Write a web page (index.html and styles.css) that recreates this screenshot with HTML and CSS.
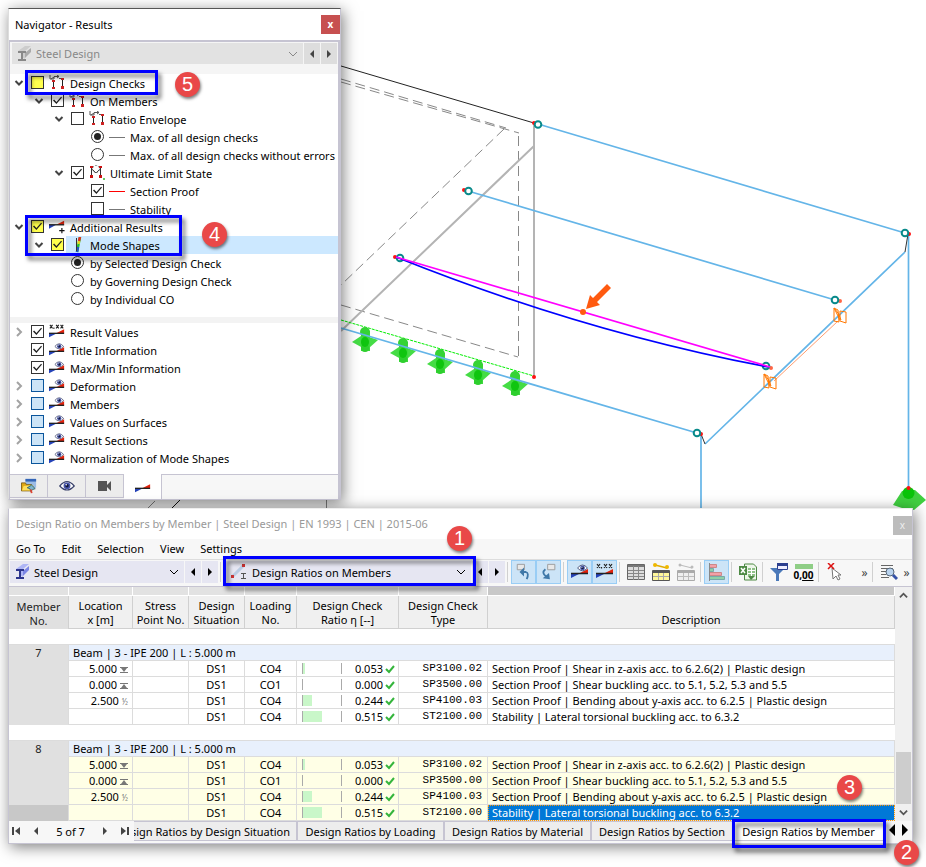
FILE: index.html
```html
<!DOCTYPE html>
<html lang="en">
<head>
<meta charset="utf-8">
<title>Steel Design Results</title>
<link rel="stylesheet" href="styles.css">
</head>
<body>
<svg class="defs" aria-hidden="true">
  <defs>
    <symbol id="i-open" viewBox="0 0 10 10"><path d="M1.5 3 5 6.500 8.500 3" fill="none" stroke="#444" stroke-width="2"/></symbol>
    <symbol id="i-closed" viewBox="0 0 10 10"><path d="M3 1 7 5 3 9" fill="none" stroke="#a3a3a3" stroke-width="2"/></symbol>
    <symbol id="i-down" viewBox="0 0 10 10"><path d="M1 3 5 7 9 3" fill="none" stroke="currentColor" stroke-width="1"/></symbol>
    <symbol id="i-left" viewBox="0 0 8 8"><path d="M6 0v8L2 4z" fill="currentColor"/></symbol>
    <symbol id="i-right" viewBox="0 0 8 8"><path d="M2 0v8l4-4z" fill="currentColor"/></symbol>
    <symbol id="i-frame" viewBox="0 0 16 16"><path d="M4.500 6v8M13.500 3v10" fill="none" stroke="#222"/><path d="M1 0v4h4V2M2 4l3-2M5 1.500h5M8 0l2 1.500L8 3M10 3.500h4" fill="none" stroke="#555"/><path d="M3 5h3v2H3zM3 12h3v2H3zM12 11h3v3h-3zM12 3h3v2h-3z" fill="#c22"/></symbol>
    <symbol id="i-uls" viewBox="0 0 16 16"><path d="M2.500 3v9M11.500 3v9M3 4l4 4 4-4" fill="none" stroke="#333"/><circle cx="7" cy="4" r="3.500" fill="none" stroke="#777" stroke-dasharray="2 1"/><path d="M1 1h3v2H1zM10 1h3v2h-3zM1 10h3v3H1zM10 10h3v3h-3z" fill="#c11"/><path d="M14 13h2v2h-2z" fill="#6c6"/></symbol>
    <symbol id="i-result" viewBox="0 0 18 16"><path d="M0 14V9.500h9z" fill="#2442b8"/><path d="M8 9.500 17 5v4.500z" fill="#e3210b"/><path d="M0 9.500h17" stroke="#222" stroke-width="1.500"/></symbol>
    <symbol id="i-eye" viewBox="0 0 20 12"><path d="M1 6Q10-5 19 6 10 16 1 6z" fill="#fff" stroke="#38406a" stroke-width="1.500"/><circle cx="10" cy="5.800" r="4.300" fill="#4654a8"/><circle cx="10" cy="5.800" r="2.200" fill="#10163c"/><circle cx="9" cy="4.500" r="1" fill="#fff"/></symbol>
    <symbol id="i-result-plus" viewBox="0 0 18 16"><path d="M0 10V5.500h8z" fill="#2442b8"/><path d="M8 5.500 17 1v4.500z" fill="#e3210b"/><path d="M0 5.500h17" stroke="#222" stroke-width="1.500"/><path d="M14.500 9v6M11.500 12h6" stroke="#111" stroke-width="1.300"/></symbol>
    <symbol id="i-result-eye" viewBox="0 0 18 16"><use href="#i-result"/><use href="#i-eye" x="6" y="0" width="11" height="8"/></symbol>
    <symbol id="i-result-val" viewBox="0 0 18 16"><use href="#i-result"/><path d="m1 0 3 4m0-4L1 4m7-4 3 4m0-4L8 4m5-4 3 4m0-4-3 4M5.500 3v1.500" stroke="#222" stroke-width="1.200" fill="none"/></symbol>
    <symbol id="i-mode" viewBox="0 0 16 16"><path d="M11 0 8 15" stroke="#27c22e" stroke-width="2.500"/><path d="m11 0-1 4" stroke="#e03020" stroke-width="2.500"/><path d="m10 4-.5 3" stroke="#e8da20" stroke-width="2.500"/><path d="m9 10-1 5" stroke="#2354c8" stroke-width="2.500"/><path d="M7.500 1v13" stroke="#333"/></symbol>
    <symbol id="i-beam" viewBox="0 0 16 16"><path d="m1 5 7-5h6L8 5v8l-2-1V6z" fill="#aeb5f5"/><path d="m8 7 6-5v4L8 12z" fill="#7c86e5"/><path d="M1 6h8M1 14h8" stroke="#2c348d" stroke-width="2"/><path d="M5 6v8" stroke="#2c348d" stroke-width="2"/></symbol>
    <symbol id="i-beam-gray" viewBox="0 0 16 16"><path d="m1 5 7-5h6L8 5v8l-2-1V6z" fill="#ccc"/><path d="m8 7 6-5v4L8 12z" fill="#aaa"/><path d="M1 6h8M1 14h8M5 6v8" stroke="#888" stroke-width="2"/></symbol>
    <symbol id="i-member" viewBox="0 0 16 16"><path d="m2 12 10-10" stroke="#b9cbe2" stroke-width="3"/><path d="M0 11h3v3H0zM11 0h3v3h-3z" fill="#c33"/><path d="M10 9.500h5M10 14.500h5M12.500 10v5" stroke="#555" fill="none"/></symbol>
    <symbol id="i-folder" viewBox="0 0 18 18"><path d="M5 1h12v10H5z" fill="#9cbce6"/><path d="M5 1h12v3H5z" fill="#3465b7"/><path d="M.5 5.500H5l1 2h6v7H.5z" fill="#e1a915" stroke="#7b5b10"/><path d="m3 9 11-1-3 6H1z" fill="#ffe05c"/><path d="m7 11 5-3 4 4-3 1-2 2-1-3z" fill="#7db5d0" stroke="#366"/><path d="m11 13 1 4" stroke="#d43" stroke-width="2"/></symbol>
    <symbol id="i-camera" viewBox="0 0 16 12"><path d="M1 1h9v10H1zM10 5l4-4v10l-4-4z" fill="#555"/></symbol>
    <symbol id="i-undo" viewBox="0 0 20 20"><path d="M2.500 1.500h8v6h-8z" fill="#e8e8e8" stroke="#999"/><path d="M9 10h3q4 1 1 8" fill="none" stroke="#3f78a8" stroke-width="2"/><path d="m5 10 5-5v10z" fill="#3f78a8"/></symbol>
    <symbol id="i-redo" viewBox="0 0 20 20"><path d="M8.500 1.500h8v6h-8z" fill="#e8e8e8" stroke="#999"/><path d="M6 7q-5 4 1 8" fill="none" stroke="#3f78a8" stroke-width="2"/><path d="m10 11 1 7-8-1z" fill="#3f78a8"/></symbol>
    <symbol id="i-grid" viewBox="0 0 18 18"><path d="M.5 1.500h17v15H.5z" fill="#ddd" stroke="#666"/><path d="M1 2h16v2H1z" fill="#777"/><path d="M1 7.500h16M1 10.500h16M1 13.500h16M6.500 3v14M11.500 3v14" stroke="#888"/></symbol>
    <symbol id="i-ytable" viewBox="0 0 18 18"><path d="m3 2 12 3" stroke="#e0ac00" stroke-width="1.500"/><circle cx="3" cy="2" r="2" fill="#efb800"/><circle cx="15" cy="4" r="2" fill="#efb800"/><path d="M.5 7.500h17v10H.5z" fill="#fff79a" stroke="#555"/><path d="M1 8h16v2H1z" fill="#555"/><path d="M1 13.500h16M6.500 10v7M11.500 10v7" stroke="#aaa"/></symbol>
    <symbol id="i-gtable" viewBox="0 0 18 18"><path d="m3 2 12 3" stroke="#bbb"/><circle cx="3" cy="2" r="1.500" fill="#bbb"/><circle cx="15" cy="4" r="1.500" fill="#bbb"/><path d="M.5 7.500h17v10H.5z" fill="#eee" stroke="#aaa"/><path d="M1 8h16v2H1z" fill="#aaa"/><path d="M1 13.500h16M6.500 10v7M11.500 10v7" stroke="#bbb"/></symbol>
    <symbol id="i-bars" viewBox="0 0 18 18"><path d="M1.500 1.500h7v3h-7zM1.500 9.500h12v3h-12z" fill="#f2a0a8" stroke="#c88"/><path d="M1.500 5.500h4v3h-4zM1.500 13.500h15v3h-15z" fill="#8fd0a8" stroke="#7aa"/><path d="M1.500 0v18" stroke="#888"/></symbol>
    <symbol id="i-excel" viewBox="0 0 18 18"><path d="M5.500 1h9l3 3v13h-12z" fill="#eef6ea" stroke="#4e8a45"/><path d="M0 3h8v9H0z" fill="#4e8a45"/><path d="m2 5 4 5m0-5-4 5" stroke="#fff" stroke-width="1.500"/><path d="M9 5h7v8H9z" fill="#8fc187"/><path d="M9 7.500h7M9 10.500h7M12.500 5v8" stroke="#fff"/><path d="m9 13 3 4 4-4z" fill="#4e8a45"/></symbol>
    <symbol id="i-filter" viewBox="0 0 18 18"><path d="M0 5h15l-6 6v7H6v-7z" fill="#4b79b9"/><path d="M7.500.5h10v6h-10z" fill="#eef" stroke="#2c3f8f"/><path d="M7 0h11v3H7z" fill="#2c3f8f"/></symbol>
    <symbol id="i-pick" viewBox="0 0 16 18"><path d="m5 5 1 11 3-3 2 4 2-1-2-4h3z" fill="#fff" stroke="#777"/><path d="m1 0 6 6m0-6L1 6" stroke="#d11" stroke-width="1.500"/></symbol>
    <symbol id="i-search" viewBox="0 0 18 18"><path d="M1 2.500h12M1 5.500h12M1 8.500h5M1 11.500h5M1 14.500h8" stroke="#666"/><circle cx="10" cy="9" r="4" fill="#b9d3ef" stroke="#567"/><path d="m13 12 4 4" stroke="#3552a8" stroke-width="3"/></symbol>
    <symbol id="i-ok" viewBox="0 0 10 10"><path d="m1 5 3 3 5-6" fill="none" stroke="#35b53c" stroke-width="2"/></symbol>
    <symbol id="i-end" viewBox="0 0 8 6"><path d="M0 .5h8M0 5.500h8" stroke="#777"/><path d="M1 1h6L4 5z" fill="#777"/></symbol>
    <symbol id="i-start" viewBox="0 0 8 6"><path d="M0 .5h8M0 5.500h8" stroke="#777"/><path d="M1 5h6L4 1z" fill="#777"/></symbol>
    <g id="support"><path d="m-13 2 9-6 8 1 9 3-9 8H-2z" fill="#45dc45"/><path d="M-4-9h9v20h-9z" fill="#3ed83e"/><circle cx="0" cy="-8" r="5" fill="#35d335"/><circle cx="0" cy="8" r="4" fill="#2ecf2e"/><ellipse cx="0" cy="2" rx="4" ry="5" fill="#0fc50f"/></g>
    <g id="hinge" fill="none" stroke="#f70"><path d="m-6-7 4 2 1 12-5-1zM0-4l6 1V8L0 6zM-6-7 0 5M-5-6q4 4 6 11"/></g>
  </defs>
</svg>
<main class="desktop">
  <svg class="model" width="926" height="867" viewBox="0 0 926 867" role="img" aria-label="Structural model">
    <g fill="none">
      <path d="M341 66 534 123" stroke="#222"/>
      <path d="M341 79 506 128M341 82l178 51M504 129 341 285M518.500 136v221M341 305l177 52" stroke="#888" stroke-dasharray="10 5"/>
      <path d="M534 123v253M534 146 341 331" stroke="#b4b4b4" stroke-width="2"/>
      <path d="m341 320 193 56" stroke="#0e0" stroke-dasharray="3 1"/>
      <path d="M155 501 148 508M326.500 499v10" stroke="#888"/><path d="m181 499-10 10" stroke="#111"/>
    </g>
    <use href="#support" x="365" y="340"/><use href="#support" x="403" y="351"/><use href="#support" x="440" y="362"/><use href="#support" x="478" y="373"/><use href="#support" x="515" y="384"/>
    <g fill="none" stroke="#64b5e8" stroke-width="1.700">
      <path d="m341 328 356 105M538 124l367 109M468 191l367 109M905 252 705 444M908.500 235v252M701 434v75"/>
    </g>
    <path d="m908 234-3 18M701 434l4 10" stroke="#333"/>
    <path d="m838 321-64 60" stroke="#ff9d70"/>
    <use href="#hinge" x="840" y="315"/><use href="#hinge" x="770" y="381"/>
    <path d="M893 505l9-14 13-1 11 10-12 10-9-1z" fill="#40d040"/><circle cx="908.500" cy="493" r="6" fill="#0ac40a"/>
    <g fill="#f11"><circle cx="534" cy="123" r="2"/><circle cx="464" cy="190" r="2"/><circle cx="395" cy="257" r="2"/><circle cx="909" cy="234" r="2"/><circle cx="701" cy="434" r="2"/><circle cx="534" cy="377" r="2"/><circle cx="908.500" cy="488" r="2"/></g>
    <g fill="#f64"><circle cx="840" cy="301" r="2"/><circle cx="771" cy="368" r="2"/></g>
    <g fill="#fff" stroke="#098a8a" stroke-width="2"><circle cx="538" cy="124.500" r="3.300"/><circle cx="468.500" cy="191" r="3.300"/><circle cx="400" cy="258" r="3.300"/><circle cx="905" cy="233" r="3.300"/><circle cx="835" cy="300" r="3.300"/><circle cx="766" cy="366" r="3.300"/><circle cx="697" cy="433" r="3.300"/></g>
    <path d="M396 257Q583 332 768 367" fill="none" stroke="#00f" stroke-width="1.700"/>
    <path d="m396 257 374 110" stroke="#f0f" stroke-width="1.700"/>
    <circle cx="583" cy="312" r="3" fill="#ff5a10"/>
    <path d="m586 309 4-14 3 3 14-14 4 4-14 14 3 3z" fill="#ff5a10"/>
  </svg>

  <section class="window navigator">
    <header class="nav-title"><h1>Navigator - Results</h1><button class="close" aria-label="Close navigator">x</button></header>
    <div class="nav-body">
      <div class="nav-combo">
        <label class="combo combo-off"><svg class="ico"><use href="#i-beam-gray"/></svg><select disabled aria-label="Add-on"><option>Steel Design</option></select><svg class="drop"><use href="#i-down"/></svg></label>
        <button aria-label="Previous"><svg class="arr"><use href="#i-left"/></svg></button><button aria-label="Next"><svg class="arr"><use href="#i-right"/></svg></button>
      </div>
      <div class="tree">
        <label class="row"><svg class="tw"><use href="#i-open"/></svg><input type="checkbox" class="mark"><svg class="ico"><use href="#i-frame"/></svg><span>Design Checks</span></label>
        <label class="row l1"><svg class="tw"><use href="#i-open"/></svg><input type="checkbox" checked><svg class="ico"><use href="#i-frame"/></svg><span>On Members</span></label>
        <label class="row l2"><svg class="tw"><use href="#i-open"/></svg><input type="checkbox"><svg class="ico"><use href="#i-frame"/></svg><span>Ratio Envelope</span></label>
        <label class="row l3"><i class="tw"></i><input type="radio" name="env" checked><i class="dash"></i><span>Max. of all design checks</span></label>
        <label class="row l3"><i class="tw"></i><input type="radio" name="env"><i class="dash"></i><span>Max. of all design checks without errors</span></label>
        <label class="row l2"><svg class="tw"><use href="#i-open"/></svg><input type="checkbox" checked><svg class="ico"><use href="#i-uls"/></svg><span>Ultimate Limit State</span></label>
        <label class="row l3"><i class="tw"></i><input type="checkbox" checked><i class="dash red"></i><span>Section Proof</span></label>
        <label class="row l3"><i class="tw"></i><input type="checkbox"><i class="dash"></i><span>Stability</span></label>
        <label class="row"><svg class="tw"><use href="#i-open"/></svg><input type="checkbox" class="mark" checked><svg class="ico"><use href="#i-result-plus"/></svg><span>Additional Results</span></label>
        <label class="row l1 selected"><svg class="tw"><use href="#i-open"/></svg><input type="checkbox" class="mark" checked><svg class="ico"><use href="#i-mode"/></svg><span>Mode Shapes</span></label>
        <label class="row l2"><i class="tw"></i><input type="radio" name="mode" checked><span>by Selected Design Check</span></label>
        <label class="row l2"><i class="tw"></i><input type="radio" name="mode"><span>by Governing Design Check</span></label>
        <label class="row l2"><i class="tw"></i><input type="radio" name="mode"><span>by Individual CO</span></label>
      </div>
      <div class="tree lower">
        <label class="row"><svg class="tw"><use href="#i-closed"/></svg><input type="checkbox" checked><svg class="ico"><use href="#i-result-val"/></svg><span>Result Values</span></label>
        <label class="row"><i class="tw"></i><input type="checkbox" checked><svg class="ico"><use href="#i-result-eye"/></svg><span>Title Information</span></label>
        <label class="row"><i class="tw"></i><input type="checkbox" checked><svg class="ico"><use href="#i-result-eye"/></svg><span>Max/Min Information</span></label>
        <label class="row"><svg class="tw"><use href="#i-closed"/></svg><input type="checkbox" class="part"><svg class="ico"><use href="#i-result-eye"/></svg><span>Deformation</span></label>
        <label class="row"><svg class="tw"><use href="#i-closed"/></svg><input type="checkbox" class="part"><svg class="ico"><use href="#i-result-eye"/></svg><span>Members</span></label>
        <label class="row"><svg class="tw"><use href="#i-closed"/></svg><input type="checkbox" class="part"><svg class="ico"><use href="#i-result-eye"/></svg><span>Values on Surfaces</span></label>
        <label class="row"><svg class="tw"><use href="#i-closed"/></svg><input type="checkbox" class="part"><svg class="ico"><use href="#i-result-eye"/></svg><span>Result Sections</span></label>
        <label class="row"><svg class="tw"><use href="#i-closed"/></svg><input type="checkbox" class="part"><svg class="ico"><use href="#i-result-eye"/></svg><span>Normalization of Mode Shapes</span></label>
      </div>
      <nav class="nav-tabs">
        <button aria-label="Data"><svg class="ico"><use href="#i-folder"/></svg></button><button aria-label="Display"><svg class="ico"><use href="#i-eye"/></svg></button><button aria-label="Views"><svg class="ico"><use href="#i-camera"/></svg></button><button class="active" aria-label="Results"><svg class="ico"><use href="#i-result"/></svg></button>
      </nav>
    </div>
  </section>

  <section class="window results">
    <header class="res-title"><h2>Design Ratio on Members by Member | Steel Design | EN 1993 | CEN | 2015-06</h2><button class="close faded" aria-label="Close table">x</button></header>
    <nav class="menu"><button>Go To</button><button>Edit</button><button>Selection</button><button>View</button><button>Settings</button></nav>
    <div class="toolbar">
      <label class="combo addon"><svg class="ico"><use href="#i-beam"/></svg><select aria-label="Add-on"><option>Steel Design</option></select><svg class="drop"><use href="#i-down"/></svg></label>
      <button class="step" aria-label="Previous add-on"><svg class="arr"><use href="#i-left"/></svg></button><button class="step" aria-label="Next add-on"><svg class="arr"><use href="#i-right"/></svg></button><i class="sep"></i>
      <label class="combo ratios"><svg class="ico"><use href="#i-member"/></svg><select aria-label="Table"><option>Design Ratios on Members</option></select><svg class="drop"><use href="#i-down"/></svg></label>
      <button class="step" aria-label="Previous table"><svg class="arr"><use href="#i-left"/></svg></button><button class="step" aria-label="Next table"><svg class="arr"><use href="#i-right"/></svg></button><i class="sep"></i>
      <button class="tool on" aria-label="Sync from model"><svg><use href="#i-undo"/></svg></button><button class="tool on" aria-label="Sync to model"><svg><use href="#i-redo"/></svg></button><i class="sep"></i>
      <button class="tool on" aria-label="Show results"><svg><use href="#i-result-eye"/></svg></button><button class="tool on" aria-label="Show values"><svg><use href="#i-result-val"/></svg></button><i class="sep"></i>
      <button class="tool" aria-label="All rows"><svg><use href="#i-grid"/></svg></button><button class="tool" aria-label="Selected members"><svg><use href="#i-ytable"/></svg></button><button class="tool" aria-label="Other members"><svg><use href="#i-gtable"/></svg></button><i class="sep"></i>
      <button class="tool on" aria-label="Color bars"><svg><use href="#i-bars"/></svg></button><i class="sep"></i>
      <button class="tool" aria-label="Export"><svg><use href="#i-excel"/></svg></button><i class="sep"></i>
      <button class="tool" aria-label="Filter"><svg><use href="#i-filter"/></svg></button><button class="tool decimals"><i></i>0,<u>00</u></button><i class="sep"></i>
      <button class="tool" aria-label="Pick"><svg><use href="#i-pick"/></svg></button>
      <button class="more first">»</button><i class="sep"></i>
      <button class="tool" aria-label="Find"><svg><use href="#i-search"/></svg></button><button class="more">»</button>
    </div>
    <div class="grid-area">
      <table>
        <colgroup><col class="c-no"><col class="c-loc"><col class="c-str"><col class="c-sit"><col class="c-load"><col class="c-ratio"><col class="c-type"><col></colgroup>
        <thead>
          <tr class="strip"><td></td><td></td><td></td><td></td><td></td><td></td><td></td><td class="dark"></td></tr>
          <tr><th class="no">Member<br>No.</th><th>Location<br>x [m]</th><th>Stress<br>Point No.</th><th>Design<br>Situation</th><th>Loading<br>No.</th><th>Design Check<br>Ratio η [--]</th><th>Design Check<br>Type</th><th><br>Description</th></tr>
        </thead>
        <tbody>
          <tr class="blank"><td colspan="8"></td></tr>
          <tr class="group"><th class="no" rowspan="5">7</th><td colspan="7">Beam | 3 - IPE 200 | L : 5.000 m</td></tr>
          <tr><td class="loc">5.000<svg><use href="#i-end"/></svg></td><td></td><td>DS1</td><td>CO4</td><td><div class="ratio"><i class="gauge"><b style="width:5%"></b></i>0.053<svg><use href="#i-ok"/></svg></div></td><td class="type">SP3100.02</td><td class="desc">Section Proof | Shear in z-axis acc. to 6.2.6(2) | Plastic design</td></tr>
          <tr><td class="loc">0.000<svg><use href="#i-start"/></svg></td><td></td><td>DS1</td><td>CO1</td><td><div class="ratio"><i class="gauge"><b style="width:0%"></b></i>0.000<svg><use href="#i-ok"/></svg></div></td><td class="type">SP3500.00</td><td class="desc">Section Proof | Shear buckling acc. to 5.1, 5.2, 5.3 and 5.5</td></tr>
          <tr><td class="loc">2.500<small>½</small></td><td></td><td>DS1</td><td>CO4</td><td><div class="ratio"><i class="gauge"><b style="width:24%"></b></i>0.244<svg><use href="#i-ok"/></svg></div></td><td class="type">SP4100.03</td><td class="desc">Section Proof | Bending about y-axis acc. to 6.2.5 | Plastic design</td></tr>
          <tr><td></td><td></td><td>DS1</td><td>CO4</td><td><div class="ratio"><i class="gauge"><b style="width:51%"></b></i>0.515<svg><use href="#i-ok"/></svg></div></td><td class="type">ST2100.00</td><td class="desc">Stability | Lateral torsional buckling acc. to 6.3.2</td></tr>
          <tr class="blank"><td colspan="8"></td></tr>
        </tbody>
        <tbody class="current">
          <tr class="group"><th class="no" rowspan="4">8</th><td colspan="7">Beam | 3 - IPE 200 | L : 5.000 m</td></tr>
          <tr><td class="loc">5.000<svg><use href="#i-end"/></svg></td><td></td><td>DS1</td><td>CO4</td><td><div class="ratio"><i class="gauge"><b style="width:5%"></b></i>0.053<svg><use href="#i-ok"/></svg></div></td><td class="type">SP3100.02</td><td class="desc">Section Proof | Shear in z-axis acc. to 6.2.6(2) | Plastic design</td></tr>
          <tr><td class="loc">0.000<svg><use href="#i-start"/></svg></td><td></td><td>DS1</td><td>CO1</td><td><div class="ratio"><i class="gauge"><b style="width:0%"></b></i>0.000<svg><use href="#i-ok"/></svg></div></td><td class="type">SP3500.00</td><td class="desc">Section Proof | Shear buckling acc. to 5.1, 5.2, 5.3 and 5.5</td></tr>
          <tr><td class="loc">2.500<small>½</small></td><td></td><td>DS1</td><td>CO4</td><td><div class="ratio"><i class="gauge"><b style="width:24%"></b></i>0.244<svg><use href="#i-ok"/></svg></div></td><td class="type">SP4100.03</td><td class="desc">Section Proof | Bending about y-axis acc. to 6.2.5 | Plastic design</td></tr>
          <tr><th class="no dark"></th><td></td><td></td><td>DS1</td><td>CO4</td><td><div class="ratio"><i class="gauge"><b style="width:51%"></b></i>0.515<svg><use href="#i-ok"/></svg></div></td><td class="type">ST2100.00</td><td class="desc picked">Stability | Lateral torsional buckling acc. to 6.3.2</td></tr>
        </tbody>
      </table>
      <div class="scroll"><svg viewBox="0 0 10 10"><path d="m1 7 4-4 4 4" fill="none" stroke="#555" stroke-width="2"/></svg><i class="thumb"></i><svg viewBox="0 0 10 10"><path d="m1 3 4 4 4-4" fill="none" stroke="#555" stroke-width="2"/></svg></div>
    </div>
    <footer class="sheets">
      <div class="pager"><button aria-label="First"><svg viewBox="0 0 8 8"><path d="M1 0v8" stroke="#444" stroke-width="2"/><path d="M8 0v8L3 4z" fill="#444"/></svg></button><button aria-label="Previous"><svg><use href="#i-left"/></svg></button><span>5 of 7</span><button aria-label="Next"><svg><use href="#i-right"/></svg></button><button aria-label="Last"><svg viewBox="0 0 8 8"><path d="M7 0v8" stroke="#444" stroke-width="2"/><path d="M0 0v8l5-4z" fill="#444"/></svg></button></div>
      <button class="sheet s-cut">Design Ratios by Design Situation</button><button class="sheet">Design Ratios by Loading</button><button class="sheet">Design Ratios by Material</button><button class="sheet s-sec">Design Ratios by Section</button><button class="sheet active">Design Ratios by Member</button>
      <div class="scroller"><button aria-label="Tabs left"><svg><use href="#i-left"/></svg></button><button aria-label="Tabs right"><svg><use href="#i-right"/></svg></button></div>
    </footer>
  </section>

  <i class="frame f-checks"></i><i class="frame f-modes"></i><i class="frame f-table"></i><i class="frame f-sheet"></i>
  <b class="badge b1">1</b><b class="badge b2">2</b><b class="badge b3">3</b><b class="badge b4">4</b><b class="badge b5">5</b>
</main>
</body>
</html>
```

FILE: styles.css
```css
* { box-sizing: border-box; }
body { margin: 0; background: #fff; color: #000; font: 11px/15px "Noto Sans", "Open Sans", sans-serif; }
button, select { font: inherit; color: inherit; border: 0; padding: 0; margin: 0; background: none; }
button { display: flex; align-items: center; justify-content: center; }
svg { display: block; flex: none; }
h1, h2 { margin: 0; font-size: 11px; font-weight: 400; }
.defs { position: absolute; width: 0; height: 0; }
.desktop { position: relative; min-height: 100vh; padding: 8px 13px 23px 8px; overflow: hidden; }
.model { position: absolute; left: 0; top: 0; }
.window { position: relative; background: #fff; border: 1px solid #c6c4d2; box-shadow: 2px 3px 14px rgba(0, 0, 0, .5); }
.ico { width: 16px; height: 16px; }
.arr { width: 8px; height: 8px; }
.drop { width: 10px; height: 10px; pointer-events: none; }

/* navigator */
.navigator { width: 333px; border-color: #555 #c6c4d2 #c6c4d2 #ddd; }
.nav-title { display: flex; align-items: center; justify-content: space-between; height: 31px; padding: 0 0 0 6px; }
.close { width: 19px; height: 19px; background: #c75050; color: #fff; font-weight: 700; font-size: 10px; }
.close.faded { background: #bcbcbc; color: #eee; font-weight: 400; }
.nav-body { border: 1px solid #c6c4d2; border-bottom: 0; border-width: 2px 2px 0 1px; }
.nav-combo { display: flex; gap: 1px; padding: 1px 1px 10px 2px; background: #f5f5f5; }
.nav-combo button { width: 16px; height: 21px; background: #ddd; color: #444; }
.combo { display: flex; align-items: center; gap: 3px; height: 22px; padding: 0 5px; background: #e6e6f2; }
.combo select { flex: 1; min-width: 0; appearance: none; opacity: 1; }
.nav-combo .combo-off { flex: 1; height: 21px; background: #e2e2e2; color: #888; }
.tree { background: #fff; padding-bottom: 9px; }
.tree.lower { border-top: 6px solid #f3f3f3; padding: 0 0 7px; }
.row { display: flex; align-items: center; height: 18px; padding-left: 4px; white-space: nowrap; }
.l1 { padding-left: 24px; }
.l2 { padding-left: 44px; }
.l3 { padding-left: 64px; }
.tw { width: 10px; height: 10px; margin-right: 7px; }
.row input { appearance: none; position: relative; flex: none; width: 13px; height: 13px; margin: 0 5px 1px 0; border: 1px solid #333; background: #fff; }
.row input[type="radio"] { border-radius: 50%; }
.row input[type="checkbox"]:checked::before { content: ""; position: absolute; inset: 1px; background: #222; clip-path: polygon(0 50%, 12% 38%, 38% 66%, 90% 8%, 100% 18%, 38% 90%); }
.row input[type="radio"]:checked::before { content: ""; position: absolute; inset: 2px; border-radius: 50%; background: #222; }
.row .mark { background: #ffff4d; }
.row .part { background: #cce4f7; border-color: #0a559c; }
.row .ico, .dash { width: 16px; margin-right: 5px; }
.dash { height: 1px; background: #777; }
.dash.red { background: #f00; }
.selected { background: linear-gradient(#cce8ff, #cce8ff) 56px 0 no-repeat; }
.row input[type="radio"] + span { padding-left: 1px; }
.nav-tabs { display: flex; height: 25px; background: #f7f7f7; border-top: 1px solid #c6c4d2; }
.nav-tabs button { width: 38px; height: 23px; background: #ededed; border: 1px solid #c6c4d2; border-width: 0 1px 1px 0; }
.nav-tabs .active { height: 25px; margin-top: -1px; background: #fff; border-bottom: 0; }

/* results window */
.results { margin-top: 8px; border-color: #eee #c6c4d2 #c6c4d2 #c6c4d2; }
.res-title { display: flex; justify-content: space-between; height: 30px; padding: 7px 0 0 7px; }
.res-title h2 { color: #999; }
.menu { display: flex; gap: 16px; height: 20px; padding: 0 0 2px 7px; background: #f7f7f7; }
.toolbar { display: flex; align-items: center; height: 27px; background: #f7f7f7; border-top: 1px solid #ddd; padding: 0 0 2px 1px; }
.addon { width: 174px; }
.ratios { width: 247px; padding-left: 7px; gap: 5px; }
.step { width: 16px; height: 22px; margin-left: 1px; background: #e6e6f2; }
.sep { flex: none; width: 1px; height: 20px; margin: 0 3px 0 2px; background: #d0d0d0; }
.tool { flex: none; width: 25px; height: 24px; }
.tool svg { width: 18px; height: 18px; }
.tool.on { background: #cce4f7; border: 1px solid #99cdf5; }
.decimals { flex-wrap: wrap; align-content: center; font-weight: 700; font-size: 10px; line-height: 12px; }
.decimals i { width: 18px; height: 5px; background: #8fce86; }
.more { width: 11px; font-size: 12px; color: #444; }
.more.first { margin-left: auto; }
.grid-area { display: flex; border-top: 1px solid #c6c4d2; }
table { flex: 1; table-layout: fixed; width: 0; border-collapse: separate; border-spacing: 0; }
.c-no { width: 60px; }
.c-loc { width: 64px; }
.c-str, .c-sit { width: 56px; }
.c-load { width: 52px; }
.c-ratio { width: 102px; }
.c-type { width: 89px; }
td, th { height: 16px; padding: 0; border: 1px solid #dcdcdc; border-width: 0 1px 1px 0; text-align: center; font-weight: 400; line-height: 15px; white-space: nowrap; overflow: hidden; }
thead th { height: 33px; background: #f0f0f0; line-height: 14px; border-color: #d0d0d0; padding-top: 2px; }
.strip td { height: 9px; background: #e2e2e2; border-color: #fff; }
.strip .dark, tbody .no.dark { background: #c8c8c8; }
.no { background: #e0e0e0; border-bottom: 0; vertical-align: top; color: #222; }
thead .no { background: #e0e0e0; vertical-align: middle; }
.blank td { border-right: 0; }
.group td { background: #e8f0fc; text-align: left; padding-left: 4px; }
.current td { background: #ffffe6; }
.current .group td { background: #e8f0fc; }
.loc { text-align: right; padding-right: 4px; }
.loc svg { display: inline-block; width: 8px; height: 6px; margin-left: 3px; }
.loc small { margin-left: 3px; font-size: 8px; line-height: 8px; color: #777; }
.ratio { display: flex; align-items: center; justify-content: flex-end; padding: 0 3px 0 5px; }
.ratio svg { width: 10px; height: 10px; margin-left: 2px; }
.gauge { width: 40px; height: 11px; margin-right: auto; border: 1px solid #aaa; border-width: 0 1px; }
.gauge b { display: block; height: 100%; background: #c9f7c9; }
.type { text-align: right; padding-right: 5px; font-family: "Liberation Mono", monospace; }
.desc { text-align: left; padding-left: 4px; }
.current .picked { background: #0078d7; color: #fff; outline: 1px dotted #f90; outline-offset: -1px; }
.scroll { display: flex; flex-direction: column; align-items: center; width: 17px; padding: 4px 0; background: #f0f0f0; }
.scroll svg { width: 9px; height: 9px; }
.thumb { width: 15px; height: 52px; margin: auto 0 4px; background: #cdcdcd; }
.sheets { display: flex; height: 22px; background: #f7f7f7; }
.pager { display: flex; flex: none; width: 125px; padding: 0 5px 2px 3px; justify-content: space-between; align-items: center; color: #444; }
.pager svg { width: 8px; height: 8px; }
.pager span { color: #000; padding: 0 4px; }
.sheet { flex: none; width: 147px; height: 20px; background: #ededed; border: 1px solid #c6c4d2; border-width: 1px 2px 1px 0; white-space: nowrap; overflow: hidden; }
.s-cut { width: 164px; justify-content: flex-end; padding-right: 6px; }
.s-sec { width: 142px; }
.sheet.active { width: 151px; background: #fff; }
.scroller { display: flex; flex: 1; justify-content: space-around; padding-bottom: 4px; color: #000; }
.scroller svg { width: 12px; height: 12px; }

/* callouts lie over the windows */
.frame { position: absolute; border: 3px solid #00f; filter: drop-shadow(3px 4px 2px rgba(0, 0, 0, .55)); pointer-events: none; }
.f-checks { left: 25px; top: 70px; width: 133px; height: 25px; }
.f-modes { left: 25px; top: 215px; width: 157px; height: 41px; }
.f-table { left: 223px; top: 556px; width: 253px; height: 30px; }
.f-sheet { left: 732px; top: 819px; width: 154px; height: 29px; }
.badge { position: absolute; width: 25px; height: 25px; border-radius: 50%; background: #e94848; color: #fff; text-align: center; font: 400 20px/25px "Liberation Sans", sans-serif; box-shadow: 1px 2px 3px rgba(0, 0, 0, .5); }
.b1 { left: 447px; top: 526px; }
.b2 { left: 894px; top: 840px; }
.b3 { left: 837px; top: 775px; }
.b4 { left: 202px; top: 222px; }
.b5 { left: 175px; top: 72px; }
```
